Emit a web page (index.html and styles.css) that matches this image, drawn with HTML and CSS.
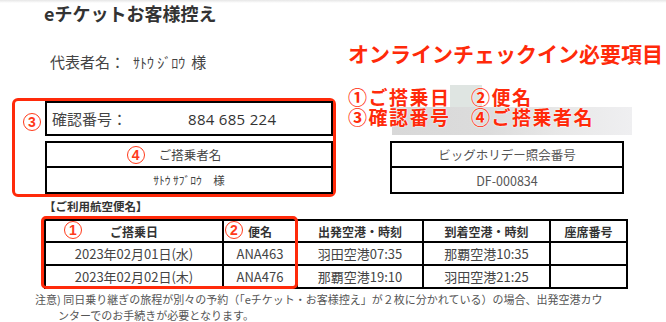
FILE: index.html
```html
<!DOCTYPE html>
<html lang="ja">
<head>
<meta charset="utf-8">
<link rel="stylesheet" href="styles.css">
</head>
<body>
<div class="page">
  <h1 class="title">eチケットお客様控え</h1>
  <div class="main">
    <div class="left">
      <div class="rep">代表者名：<span class="kana">ｻﾄｳ ｼﾞﾛｳ</span><span class="sama">様</span></div>
      <div class="redbox">
        <div class="mark-col"><span class="circ">3</span></div>
        <div class="boxes">
          <div class="conf">
            <span class="conf-label">確認番号：</span>
            <span class="conf-num">884 685 224</span>
          </div>
          <div class="pax">
            <div class="pax-head"><span class="circ circ-inline">4</span>ご搭乗者名</div>
            <div class="pax-name">ｻﾄｳ ｻﾌﾞﾛｳ　様</div>
          </div>
        </div>
      </div>
    </div>
    <div class="right">
      <div class="req-title">オンラインチェックイン必要項目</div>
      <div class="req-items">
        <div>①ご搭乗日　②便名</div>
        <div>③確認番号　④ご搭乗者名</div>
      </div>
      <div class="ref">
        <div class="ref-head">ビッグホリデー照会番号</div>
        <div class="ref-val">DF-000834</div>
      </div>
    </div>
  </div>
  <div class="sec-title">【ご利用航空便名】</div>
  <div class="table-wrap">
    <table class="flights">
      <colgroup>
        <col class="c1"><col class="c2"><col class="c3"><col class="c4"><col class="c5">
      </colgroup>
      <thead>
        <tr><th>ご搭乗日</th><th>便名</th><th>出発空港・時刻</th><th>到着空港・時刻</th><th>座席番号</th></tr>
      </thead>
      <tbody>
        <tr><td>2023年02月01日(水)</td><td>ANA463</td><td>羽田空港07:35</td><td>那覇空港10:35</td><td></td></tr>
        <tr><td>2023年02月02日(木)</td><td>ANA476</td><td>那覇空港19:10</td><td>羽田空港21:25</td><td></td></tr>
      </tbody>
    </table>
    <div class="hl"></div>
    <span class="circ m1">1</span>
    <span class="circ m2">2</span>
  </div>
  <p class="note">注意) 同日乗り継ぎの旅程が別々の予約（「eチケット・お客様控え」が２枚に分かれている）の場合、出発空港カウ<br>ンターでのお手続きが必要となります。</p>
</div>
</body>
</html>
```

FILE: styles.css
```css
* { box-sizing: border-box; }
html, body { margin: 0; padding: 0; background: #fff; }
body {
  font-family: "Noto Sans CJK JP", "Noto Sans", sans-serif;
  color: #444;
  width: 666px;
  height: 322px;
  overflow: hidden;
}
.page {
  position: relative;
  background: linear-gradient(#e6e6e6, #fff 3px);
  height: 322px;
}
.title {
  margin: 0 0 0 44px;
  font-size: 18px;
  font-weight: 700;
  line-height: 26px;
  color: #333;
}
.main { display: flex; }
.left { width: 324px; margin-left: 12px; }
.rep {
  margin: 26px 0 0 38px;
  font-size: 15px;
  line-height: 20px;
  color: #444;
}
.rep .kana { margin-left: 8px; font-size: 14px; }
.rep .sama { margin-left: 6px; }
.redbox {
  margin-top: 26px;
  border: 3px solid #ff2a0a;
  border-radius: 6px;
  display: flex;
}
.mark-col { width: 30px; padding: 7px 0 0 8px; }
.circ {
  display: inline-flex;
  align-items: center;
  justify-content: center;
  width: 18px;
  height: 18px;
  border: 1.5px solid #ff3a1a;
  border-radius: 50%;
  color: #ff3a1a;
  font-family: "Liberation Sans", sans-serif;
  font-weight: 700;
  font-size: 14px;
  line-height: 1;
}
.boxes { width: 288px; }
.conf {
  height: 35px;
  border: 2px solid #000;
  display: flex;
  align-items: center;
  padding-left: 5px;
}
.conf-label { font-size: 15px; color: #444; width: 136px; }
.conf-num { font-size: 15px; color: #333; letter-spacing: 0.3px; font-family: "Open Sans", "Noto Sans", sans-serif; }
.pax { margin-top: 5px; border: 2px solid #000; }
.pax-head, .pax-name, .ref-head, .ref-val {
  height: 24px;
  display: flex;
  align-items: center;
  justify-content: center;
  font-size: 12.5px;
  color: #444;
}
.pax-head { border-bottom: 2px solid #000; height: 25px; }
.circ-inline { margin-right: 14px; margin-left: -30px; }
.pax-name { font-size: 11.5px; }
.right { margin-left: 12px; width: 318px; position: relative; }
.req-title {
  margin-top: 15px;
  font-size: 21px;
  font-weight: 700;
  line-height: 24px;
  color: #ff2a0a;
  white-space: nowrap;
  text-shadow: 0 0 2px #fff;
}
.req-items {
  position: relative;
  margin-top: 22px;
  font-size: 19px;
  font-weight: 700;
  line-height: 20px;
  color: #ff2a0a;
  white-space: nowrap;
  letter-spacing: 1.5px;
}
.req-items > div { position: relative; z-index: 1; height: 20px; text-shadow: 0 0 2px #fff, 0 0 1px #fff; }
.req-items::before {
  content: "";
  position: absolute;
  left: 44px;
  top: 20px;
  width: 240px;
  height: 28px;
  background: linear-gradient(90deg, #d8d8d8, #dcdcdc 40%, #e8e8e8 70%, #efeff1);
}
.req-items::after {
  content: "";
  position: absolute;
  left: 102px;
  top: -2px;
  width: 32px;
  height: 22px;
  background: #dfe5e2;
}
.ref {
  margin: 14px 0 0 42px;
  width: 234px;
  border: 2px solid #000;
}
.ref-head { border-bottom: 2px solid #000; height: 25px; color: #555; }
.ref-val { color: #555; }
.sec-title {
  margin: 1px 0 0 44px;
  font-size: 11.5px;
  font-weight: 700;
  line-height: 16px;
  color: #333;
}
.table-wrap { position: relative; margin: 5px 0 0 44px; width: 582px; }
.flights {
  border-collapse: collapse;
  width: 582px;
  table-layout: fixed;
}
.c1 { width: 178px; }
.c2 { width: 74px; }
.c3 { width: 126px; }
.c4 { width: 127px; }
.c5 { width: 77px; }
.flights th, .flights td {
  border: 2px solid #000;
  text-align: center;
  padding: 0;
  white-space: nowrap;
}
.flights th { height: 22px; font-size: 12px; font-weight: 700; color: #333; }
.flights td { height: 23px; font-size: 13px; color: #444; }
.hl {
  position: absolute;
  left: -3px;
  top: -3px;
  width: 257px;
  height: 73px;
  border: 3px solid #ff2a0a;
  border-radius: 5px;
  pointer-events: none;
}
.m1 { position: absolute; left: 20px; top: 2px; }
.m2 { position: absolute; left: 181px; top: 2px; }
.note {
  margin: 2px 0 0 35px;
  padding-left: 23px;
  text-indent: -23px;
  font-size: 11px;
  line-height: 16px;
  color: #555;
  white-space: nowrap;
}
```
